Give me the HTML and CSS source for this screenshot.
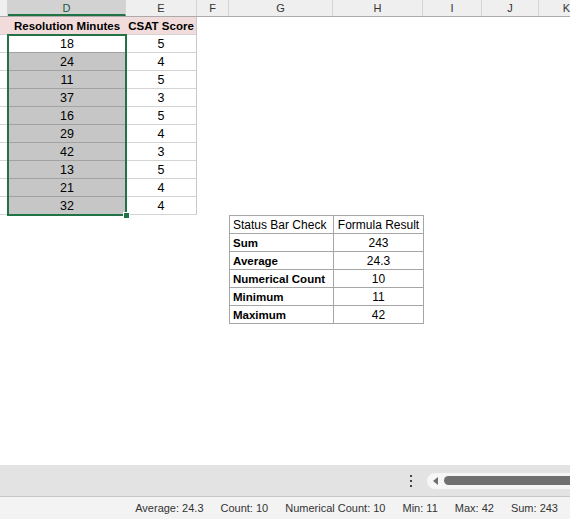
FILE: index.html
```html
<!DOCTYPE html>
<html lang="en">

<head>
    <meta charset="UTF-8">
    <meta name="viewport" content="width=device-width, initial-scale=1.0">
    <title>Status Bar Check</title>
    <link rel="stylesheet" href="styles.css">
</head>

<body>
    <div class="app">
        <div class="colheads">
            <div class="ch w-c"></div>
            <div class="ch w-d active">D</div>
            <div class="ch w-e">E</div>
            <div class="ch w-f">F</div>
            <div class="ch w-g">G</div>
            <div class="ch w-h">H</div>
            <div class="ch w-i">I</div>
            <div class="ch w-j">J</div>
            <div class="ch w-k">K</div>
        </div>

        <div class="sheet">
            <div class="block">
                <div class="col w-c">
                    <div class="cell title"></div>
                    <div class="cell"></div>
                    <div class="cell"></div>
                    <div class="cell"></div>
                    <div class="cell"></div>
                    <div class="cell"></div>
                    <div class="cell"></div>
                    <div class="cell"></div>
                    <div class="cell"></div>
                    <div class="cell"></div>
                    <div class="cell"></div>
                </div>
                <div class="col w-d">
                    <div class="cell title">Resolution Minutes</div>
                    <div class="selection">
                        <div class="cell current">18</div>
                        <div class="cell">24</div>
                        <div class="cell">11</div>
                        <div class="cell">37</div>
                        <div class="cell">16</div>
                        <div class="cell">29</div>
                        <div class="cell">42</div>
                        <div class="cell">13</div>
                        <div class="cell">21</div>
                        <div class="cell">32</div>
                        <span class="handle"></span>
                    </div>
                </div>
                <div class="col w-e">
                    <div class="cell title">CSAT Score</div>
                    <div class="cell">5</div>
                    <div class="cell">4</div>
                    <div class="cell">5</div>
                    <div class="cell">3</div>
                    <div class="cell">5</div>
                    <div class="cell">4</div>
                    <div class="cell">3</div>
                    <div class="cell">5</div>
                    <div class="cell">4</div>
                    <div class="cell">4</div>
                </div>
            </div>

            <table class="check">
                <tr>
                    <td class="lbl plain">Status Bar Check</td>
                    <td class="val">Formula Result</td>
                </tr>
                <tr>
                    <td class="lbl">Sum</td>
                    <td class="val">243</td>
                </tr>
                <tr>
                    <td class="lbl">Average</td>
                    <td class="val">24.3</td>
                </tr>
                <tr>
                    <td class="lbl">Numerical Count</td>
                    <td class="val">10</td>
                </tr>
                <tr>
                    <td class="lbl">Minimum</td>
                    <td class="val">11</td>
                </tr>
                <tr>
                    <td class="lbl">Maximum</td>
                    <td class="val">42</td>
                </tr>
            </table>
        </div>

        <div class="scrollband">
            <svg class="dots" width="4" height="14" viewBox="0 0 4 14">
                <rect x="1" y="1" width="2" height="2" fill="#444" />
                <rect x="1" y="6" width="2" height="2" fill="#444" />
                <rect x="1" y="11" width="2" height="2" fill="#444" />
            </svg>
            <div class="track">
                <svg class="arrow" width="6" height="8" viewBox="0 0 6 8">
                    <path d="M5 0 L0 4 L5 8 Z" fill="#6e6e6e" />
                </svg>
                <div class="thumb"></div>
            </div>
        </div>

        <div class="statusbar">
            <span>Average: 24.3</span>
            <span>Count: 10</span>
            <span>Numerical Count: 10</span>
            <span>Min: 11</span>
            <span>Max: 42</span>
            <span>Sum: 243</span>
        </div>
    </div>
</body>

</html>
```

FILE: styles.css
```css
* {
    box-sizing: border-box;
}

body {
    margin: 0;
    background: #fff;
    font-family: "Liberation Sans", Arial, sans-serif;
    color: #000;
}

.app {
    width: 570px;
    height: 519px;
    overflow: hidden;
    display: flex;
    flex-direction: column;
}

/* column letters */
.colheads {
    display: flex;
    height: 17px;
    flex-shrink: 0;
    background: #efefef;
    border-bottom: 1px solid #ababab;
}

.ch {
    flex-shrink: 0;
    border-right: 1px solid #d4d4d4;
    font-size: 11px;
    line-height: 16px;
    text-align: center;
    color: #333;
}

.ch.active {
    background: #d2d2d2;
    color: #185c37;
    border-bottom: 2px solid #217346;
}

.w-c { width: 8px; }
.w-d { width: 118px; }
.w-e { width: 71px; }
.w-f { width: 32px; }
.w-g { width: 104px; }
.w-h { width: 90px; }
.w-i { width: 59px; }
.w-j { width: 57px; }
.w-k { width: 56px; }

/* grid */
.sheet {
    height: 448px;
    flex-shrink: 0;
}

.block {
    display: flex;
}

.col {
    flex-shrink: 0;
}

.cell {
    height: 18px;
    padding-top: 1px;
    border-bottom: 1px solid #d4d4d4;
    font-size: 12.5px;
    line-height: 16px;
    text-align: center;
    white-space: nowrap;
}

.w-e .cell {
    border-right: 1px solid #c8c8c8;
}

.cell.title {
    background: #f2dcdb;
    font-weight: bold;
    font-size: 11.5px;
}

.selection {
    position: relative;
    outline: 2px solid #217346;
    outline-offset: -1px;
}

.selection .cell {
    background: #c6c6c6;
    border-bottom-color: #a2a2a2;
}

.selection .cell.current {
    background: #fff;
}

.handle {
    position: absolute;
    right: -4px;
    bottom: -4px;
    width: 7px;
    height: 7px;
    background: #217346;
    border: 1px solid #fff;
}

/* check table */
.check {
    margin-left: 229px;
    border-collapse: collapse;
    font-size: 12px;
}

.check td {
    height: 18px;
    padding: 1px 3px 0;
    border: 1px solid #a6a6a6;
    line-height: 16px;
    white-space: nowrap;
}

.check .lbl {
    width: 104px;
    font-weight: bold;
    font-size: 11.5px;
}

.check .lbl.plain {
    font-weight: normal;
    font-size: 12px;
}

.check .val {
    width: 90px;
    text-align: center;
}

/* bottom bars */
.scrollband {
    height: 31px;
    flex-shrink: 0;
    background: #e3e3e3;
    display: flex;
    align-items: center;
    padding-left: 409px;
}

.dots {
    flex-shrink: 0;
}

.track {
    flex-shrink: 0;
    margin-left: 14px;
    width: 200px;
    height: 16px;
    border-radius: 8px;
    background: #f6f6f6;
    display: flex;
    align-items: center;
    padding-left: 6px;
}

.arrow {
    flex-shrink: 0;
}

.thumb {
    flex-grow: 1;
    height: 9px;
    margin-left: 5px;
    border-radius: 5px;
    background: #707070;
}

.statusbar {
    height: 23px;
    flex-shrink: 0;
    background: #f3f3f3;
    border-top: 1px solid #c6c6c6;
    display: flex;
    justify-content: flex-end;
    align-items: center;
    gap: 17px;
    padding-right: 12px;
    font-size: 11px;
    color: #333;
}
```
